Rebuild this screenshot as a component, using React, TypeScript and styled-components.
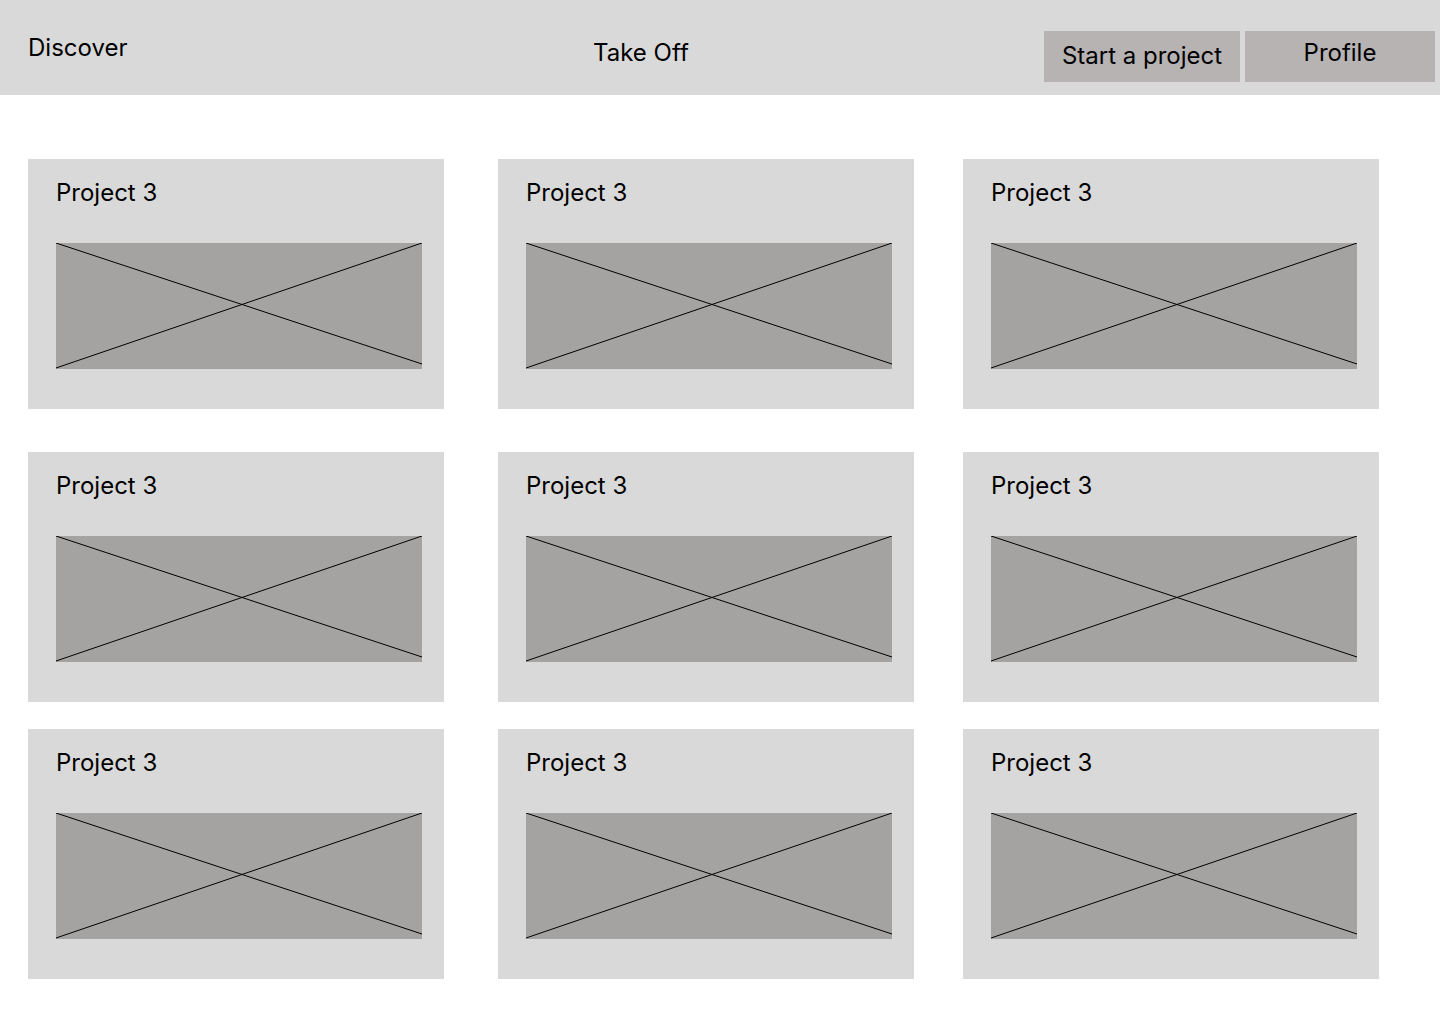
import * as React from 'react';
import styled, { createGlobalStyle } from 'styled-components';

const GlobalStyle = createGlobalStyle`
  html, body {
    margin: 0;
    padding: 0;
    background: #ffffff;
  }
  body {
    font-family: Inter, "Noto Sans", sans-serif;
    color: #000000;
  }
`;

const Page = styled.div`
  width: 1440px;
  min-height: 1024px;
  background: #ffffff;
`;

const Header = styled.header`
  height: 95px;
  background: #d9d9d9;
  display: grid;
  grid-template-columns: 565px 451px 196px 195px;
  column-gap: 0;
  padding-left: 28px;
  align-items: start;
`;

const NavText = styled.div<{ $top: number }>`
  font-size: 24px;
  line-height: 29px;
  padding-top: ${(p) => p.$top}px;
  white-space: nowrap;
`;

const Button = styled.button<{ $textTop: number; $gapLeft?: number }>`
  margin-top: 31px;
  margin-left: ${(p) => p.$gapLeft ?? 0}px;
  height: 51px;
  border: none;
  background: #b7b3b3;
  font-family: Inter, "Noto Sans", sans-serif;
  font-size: 24px;
  line-height: 29px;
  color: #000000;
  padding: ${(p) => p.$textTop}px 0 0 0;
  display: flex;
  justify-content: center;
  align-items: flex-start;
  cursor: pointer;
`;

const Grid = styled.main`
  display: grid;
  grid-template-columns: 416px 54px 416px 49px 416px;
  grid-template-rows: 250px 43px 250px 27px 250px;
  padding: 64px 0 0 28px;
`;

const Card = styled.div<{ $col: number; $row: number }>`
  grid-column: ${(p) => p.$col};
  grid-row: ${(p) => p.$row};
  background: #d9d9d9;
  padding: 19px 21px 0 28px;
  display: flex;
  flex-direction: column;
`;

const CardTitle = styled.div`
  font-size: 24px;
  line-height: 29px;
  margin-bottom: 36px;
`;

const Placeholder = styled.div`
  width: 366px;
  height: 126px;
  background: #a4a3a1;

  svg {
    display: block;
    width: 100%;
    height: 100%;
  }
`;

const ImagePlaceholder = () => (
  <Placeholder>
    <svg viewBox="0 0 366 126" preserveAspectRatio="none">
      <line x1="0" y1="0" x2="366" y2="121" stroke="#000" strokeWidth="1" />
      <line x1="0" y1="125" x2="366" y2="0" stroke="#000" strokeWidth="1" />
    </svg>
  </Placeholder>
);

const cards = [
  { col: 1, row: 1 },
  { col: 3, row: 1 },
  { col: 5, row: 1 },
  { col: 1, row: 3 },
  { col: 3, row: 3 },
  { col: 5, row: 3 },
  { col: 1, row: 5 },
  { col: 3, row: 5 },
  { col: 5, row: 5 },
];

export default function App() {
  return (
    <Page>
      <GlobalStyle />
      <Header>
        <NavText $top={33}>Discover</NavText>
        <NavText $top={38}>Take Off</NavText>
        <Button $textTop={10}>Start a project</Button>
        <Button $textTop={7} $gapLeft={5}>Profile</Button>
      </Header>
      <Grid>
        {cards.map((c, i) => (
          <Card key={i} $col={c.col} $row={c.row}>
            <CardTitle>Project 3</CardTitle>
            <ImagePlaceholder />
          </Card>
        ))}
      </Grid>
    </Page>
  );
}
